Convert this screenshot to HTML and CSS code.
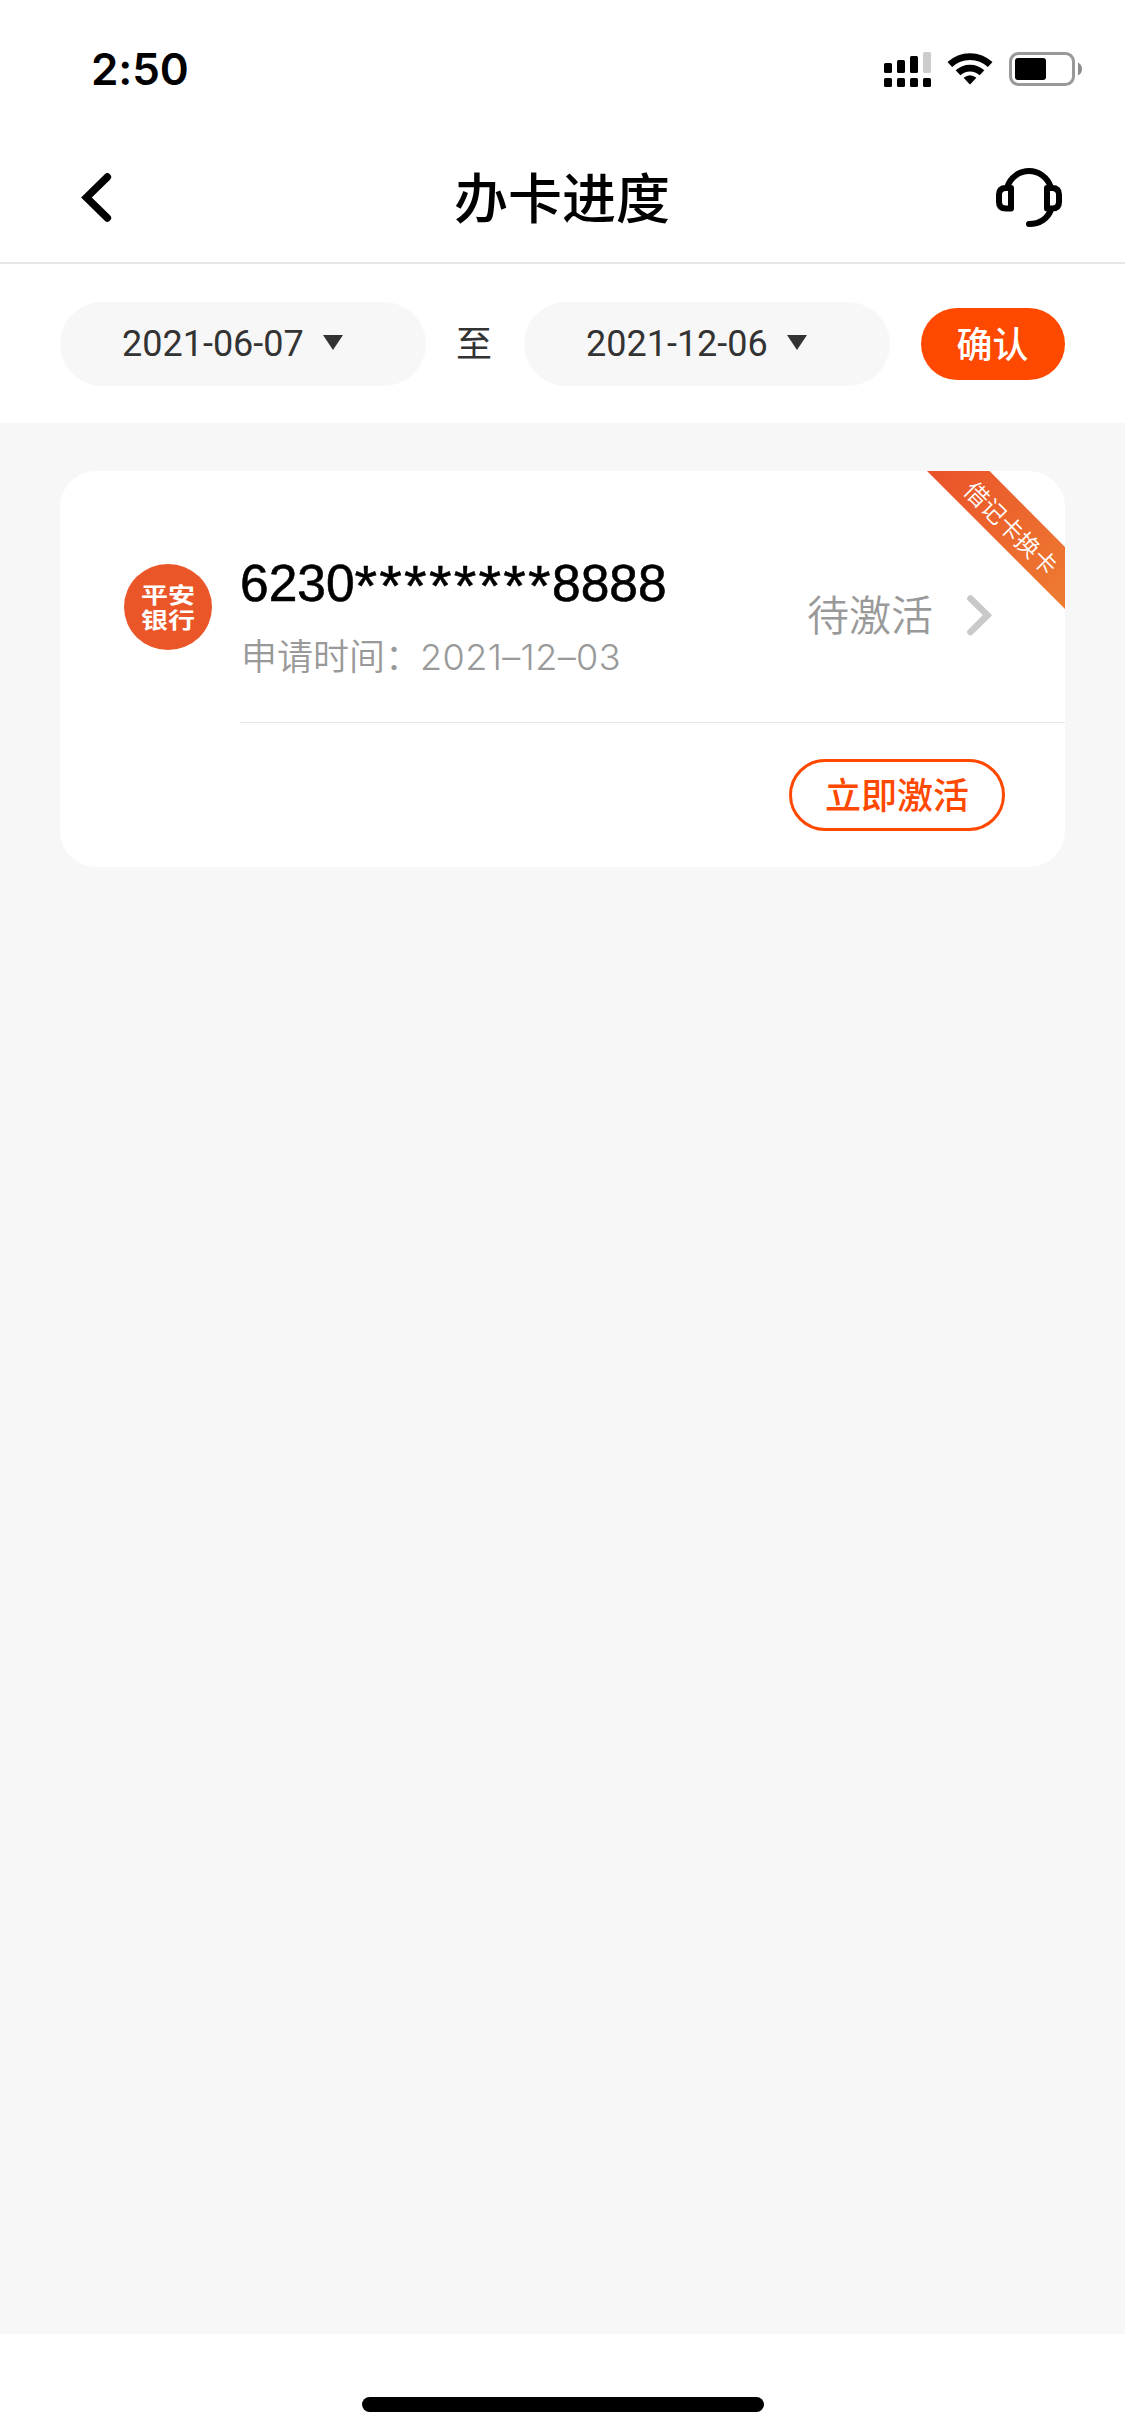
FILE: index.html
```html
<!DOCTYPE html>
<html lang="zh-CN">
<head>
<meta charset="utf-8">
<title>办卡进度</title>
<link rel="stylesheet" href="styles.css">
</head>
<body>
<div class="screen">
  <header class="status">
    <span class="time">2:50</span>
    <div class="status-icons">
      <svg width="47" height="36" viewBox="884 51 47 36">
        <g fill="#000">
          <rect x="884" y="63" width="8" height="10" rx="1.5"/>
          <rect x="897" y="60" width="8" height="13" rx="1.5"/>
          <rect x="910" y="56" width="8" height="17" rx="1.5"/>
          <rect x="884" y="78" width="8" height="9" rx="1.5"/>
          <rect x="897" y="78" width="8" height="9" rx="1.5"/>
          <rect x="910" y="78" width="8" height="9" rx="1.5"/>
          <rect x="923" y="78" width="8" height="9" rx="1.5"/>
        </g>
        <rect x="923" y="52" width="8" height="21" rx="1.5" fill="#ccc"/>
      </svg>
      <svg width="46" height="36" viewBox="948 51 46 36">
        <g fill="none" stroke="#000" stroke-width="6.8">
          <path d="M950.8 64.6A29.5 29.5 0 0 1 991.2 64.6"/>
          <path d="M959 72.8A17.5 17.5 0 0 1 983 72.8"/>
        </g>
        <path d="M964.6 77.8Q971 72.6 977.4 77.8L971.6 84Q971 84.6 970.4 84Z"/>
      </svg>
      <svg width="74" height="36" viewBox="1009 51 74 36">
        <rect x="1010.5" y="53.5" width="63" height="31" rx="8" fill="none" stroke="#999" stroke-width="3"/>
        <rect x="1015" y="58" width="31" height="22" rx="3"/>
        <path d="M1078 62.5Q1082 64.5 1082 69T1078 75.5Z" fill="#8c8c8c"/>
      </svg>
    </div>
  </header>
  <nav class="nav">
    <svg class="back" width="32" height="52" viewBox="80 171.5 32 52">
      <path d="M107.4 177.5L86.4 198L107.4 218.500" fill="none" stroke="#000" stroke-width="7.4" stroke-linecap="round"/>
    </svg>
    <h1 class="title">办卡进度</h1>
    <svg class="service" width="68" height="62" viewBox="995 167 68 62">
      <g fill="none" stroke="#000" stroke-width="6" stroke-linecap="round">
        <path d="M1007.5 187.5A22.7 22.7 0 0 1 1050.5 187.5"/>
        <path d="M1051 210.5C1048.2 219 1040 225 1029 225"/>
        <path d="M1011 189V209.5H1006Q999 209.5 999 203V195.5Q999 189 1006 189Z" stroke-linejoin="round"/>
        <path d="M1047 189V209.5H1052Q1059 209.5 1059 203V195.5Q1059 189 1052 189Z" stroke-linejoin="round"/>
      </g>
    </svg>
  </nav>
  <section class="filter">
    <button class="date">2021-06-07<i class="caret"></i></button>
    <span class="to">至</span>
    <button class="date">2021-12-06<i class="caret"></i></button>
    <button class="confirm">确认</button>
  </section>
  <main class="content">
    <article class="card">
      <div class="info">
        <div class="logo"><div class="logo-text"><span>平安</span><span>银行</span></div></div>
        <div class="detail">
          <div class="number">6230<span class="mask">********</span>8888</div>
          <div class="applied">申请时间：<span class="day">2021–12–03</span></div>
        </div>
        <div class="state">待激活</div>
        <svg class="chevron" width="26" height="44" viewBox="967 593 26 44">
          <path d="M970.5 598.5L987.5 615.2L970.5 632" fill="none" stroke="#c9c9c9" stroke-width="6.6" stroke-linecap="round"/>
        </svg>
      </div>
      <div class="actions"><button class="activate">立即激活</button></div>
      <svg class="ribbon" width="138" height="138" viewBox="0 0 138 138">
        <defs>
          <linearGradient id="orange" x1="0" y1="0" x2="1" y2="1">
            <stop offset="0" stop-color="#ea5229"/>
            <stop offset="1" stop-color="#ee7c32"/>
          </linearGradient>
        </defs>
        <path d="M0 0H62.5L138 76V138Z" fill="url(#orange)"/>
        <text class="ribbon-text" transform="translate(84 57) rotate(45)" text-anchor="middle" y="9">借记卡换卡</text>
      </svg>
    </article>
  </main>
  <footer class="home"><div class="indicator"></div></footer>
</div>
</body>
</html>
```
FILE: styles.css
```css
* { box-sizing: border-box; }
body { margin: 0; background: #fff; color: #000; font-family: "Noto Sans CJK SC", sans-serif; }
button { margin: 0; padding: 0; border: 0; font: inherit; }
svg { display: block; flex: none; }
.screen { display: flex; flex-direction: column; width: 1125px; height: 2436px; }

.status { display: flex; justify-content: space-between; height: 132px; padding: 51px 42px 0 91px; }
.time { font: 600 44px/36px Inter, sans-serif; letter-spacing: -0.1px; }
.status-icons { display: flex; gap: 16px; }

.nav { display: flex; align-items: center; justify-content: space-between; height: 132px; padding: 0 62px 0 80px; border-bottom: 2px solid #e6e6e6; }
.title { margin: 0 0 2px 17px; font-size: 54px; font-weight: 500; line-height: 80px; }

.filter { display: flex; align-items: center; height: 159px; padding: 0 60px; color: #333; font-size: 36px; }
.date { display: flex; align-items: center; width: 366px; height: 84px; padding-left: 62px; border-radius: 42px; background: #f7f7f7; color: #333; font: 36px/42px Roboto, sans-serif; }
.caret { margin: -3px 0 0 19px; border: solid transparent; border-width: 15px 10px 0; border-top-color: #333; }
.to { width: 98px; padding: 0 2px 5px 0; text-align: center; }
.confirm { width: 144px; height: 72px; margin-left: auto; padding: 0 1px 4px 0; border-radius: 36px; background: #ff4800; color: #fff; font-size: 36px; font-weight: 500; line-height: 68px; }

.content { flex: 1; padding: 48px 60px 0; background: #f7f7f7; }
.card { position: relative; height: 396px; border-radius: 36px; background: #fff; }
.info { display: flex; height: 251px; padding-left: 64px; }
.logo { display: flex; align-items: center; justify-content: center; width: 88px; height: 86px; margin-top: 93px; border-radius: 50%; background: #eb5628; color: #fff; }
.logo-text { display: flex; flex-direction: column; margin-top: -1px; font-size: 25px; font-weight: 700; line-height: 27.5px; transform: scale(1.08, 0.87); }
.detail { width: 567px; padding: 82px 0 0 28px; }
.number { height: 60px; font: 51.5px/60px "Liberation Sans", sans-serif; white-space: nowrap; -webkit-text-stroke: 0.6px #000; }
.mask { display: inline-block; width: 197.5px; font-size: 58px; line-height: 50px; letter-spacing: 2.2px; vertical-align: -5px; -webkit-text-stroke: 0.5px #000; }
.applied { margin-top: 14px; padding-left: 1px; color: #999; font-size: 36px; font-weight: 350; line-height: 54px; }
.day { margin-left: -1px; font-family: Inter, sans-serif; letter-spacing: 0.4px; }
.state { width: 160px; margin-top: 110px; padding-left: 28px; color: #999; font-size: 42px; font-weight: 350; line-height: 64px; white-space: nowrap; }
.chevron { margin: 122px 0 0 28px; }
.actions { display: flex; justify-content: flex-end; height: 145px; margin-left: 180px; padding: 36px 60px 0 0; border-top: 1px solid #e6e6e6; }
.activate { width: 216px; height: 72px; padding-bottom: 4px; border: 3px solid #ff4800; border-radius: 36px; background: #fff; color: #ff4800; font-size: 36px; font-weight: 500; line-height: 62px; }
.ribbon { position: absolute; top: 0; right: 0; }
.ribbon-text { fill: #fff; font-size: 24px; font-weight: 350; }

.home { display: flex; justify-content: center; height: 102px; padding-top: 63px; }
.indicator { width: 402px; height: 15px; border-radius: 8px; background: #000; }
```
